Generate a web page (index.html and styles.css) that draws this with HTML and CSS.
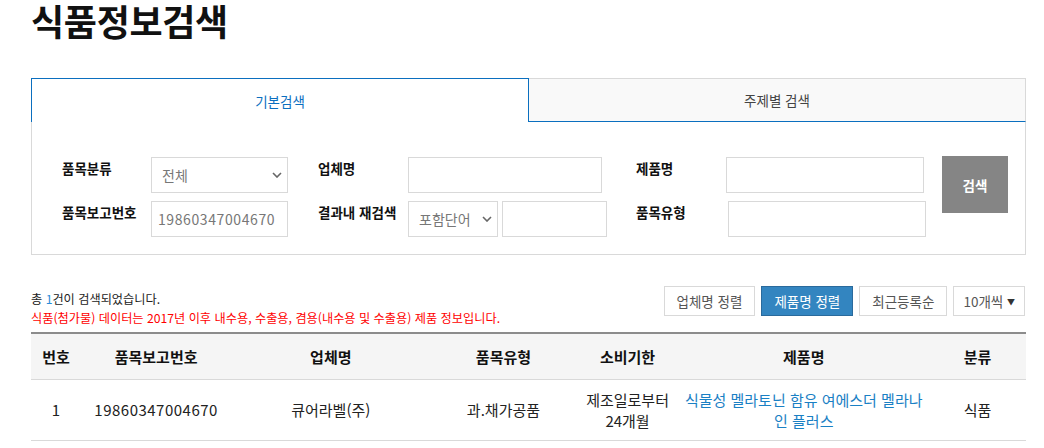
FILE: index.html
```html
<!DOCTYPE html>
<html lang="ko">

<head>
    <meta charset="UTF-8">
    <meta name="viewport" content="width=device-width, initial-scale=1.0">
    <title>식품정보검색</title>
    <link rel="stylesheet" href="styles.css">
</head>

<body>

    <div class="wrapper">
        <h1 class="title">식품정보검색</h1>

        <div class="tabs">
            <div class="tabs__item active">기본검색</div>
            <div class="tabs__item">주제별 검색</div>
        </div>

        <div class="search">
            <div class="search__row">
                <label class="search__label first">품목분류</label>
                <div class="select w137">
                    <select>
                        <option>전체</option>
                    </select>
                    <svg class="select__arrow" width="10" height="6" viewBox="0 0 10 6"><path d="M1 1l4 4 4-4" fill="none" stroke="#666" stroke-width="1.6"/></svg>
                </div>
                <label class="search__label">업체명</label>
                <input type="text" class="inp w194">
                <label class="search__label third">제품명</label>
                <input type="text" class="inp w198">
            </div>
            <div class="search__row">
                <label class="search__label first">품목보고번호</label>
                <input type="text" class="inp w137 num" value="19860347004670">
                <label class="search__label">결과내 재검색</label>
                <div class="select w90">
                    <select>
                        <option>포함단어</option>
                    </select>
                    <svg class="select__arrow" width="10" height="6" viewBox="0 0 10 6"><path d="M1 1l4 4 4-4" fill="none" stroke="#666" stroke-width="1.6"/></svg>
                </div>
                <input type="text" class="inp w105 ml4">
                <label class="search__label third wide">품목유형</label>
                <input type="text" class="inp w198">
            </div>
            <button class="search__btn">검색</button>
        </div>

        <div class="result">
            <div class="result__info">
                <p>총 <span class="blue">1</span>건이 검색되었습니다.</p>
                <p class="red">식품(첨가물) 데이터는 2017년 이후 내수용, 수출용, 겸용(내수용 및 수출용) 제품 정보입니다.</p>
            </div>
            <div class="result__sort">
                <button class="sort__btn">업체명 정렬</button>
                <button class="sort__btn on">제품명 정렬</button>
                <button class="sort__btn">최근등록순</button>
                <button class="sort__btn count">10개씩 <span class="tri">▼</span></button>
            </div>
        </div>

        <table class="table">
            <colgroup>
                <col style="width: 50px">
                <col style="width: 150px">
                <col style="width: 199px">
                <col style="width: 146px">
                <col style="width: 102px">
                <col style="width: 250px">
                <col style="width: 97px">
            </colgroup>
            <thead>
                <tr>
                    <th>번호</th>
                    <th>품목보고번호</th>
                    <th>업체명</th>
                    <th>품목유형</th>
                    <th>소비기한</th>
                    <th>제품명</th>
                    <th>분류</th>
                </tr>
            </thead>
            <tbody>
                <tr>
                    <td>1</td>
                    <td class="num">19860347004670</td>
                    <td>큐어라벨(주)</td>
                    <td>과.채가공품</td>
                    <td>제조일로부터<br>24개월</td>
                    <td><a href="#" class="link">식물성 멜라토닌 함유 여에스더 멜라나인 플러스</a></td>
                    <td>식품</td>
                </tr>
            </tbody>
        </table>
    </div>

</body>

</html>
```

FILE: styles.css
```css
* {
    margin: 0;
    padding: 0;
    box-sizing: border-box;
}

:root {
    --blue: #0b6fbf;
    --line: #d9d9d9;
    --gray: #555;
}

body {
    font-family: "Noto Sans CJK KR", "Noto Sans", sans-serif;
    font-size: 13px;
    color: #222;
    background: #fff;
}

.wrapper {
    width: 995px;
    margin-left: 31px;
}

.title {
    font-size: 36px;
    font-weight: 700;
    line-height: 40px;
    color: #111;
    letter-spacing: -0.3px;
}

/* tabs */
.tabs {
    display: flex;
    margin-top: 38px;
    height: 44px;
}

.tabs__item {
    flex: 1;
    display: flex;
    align-items: center;
    justify-content: center;
    font-size: 13.5px;
    color: #444;
    background: #f9f9f9;
    border: 1px solid var(--line);
    border-left: none;
    border-bottom: 1px solid var(--blue);
}

.tabs__item.active {
    flex: 0 0 498px;
    color: var(--blue);
    background: #fff;
    border: 1px solid var(--blue);
    border-bottom: none;
}

/* search panel */
.search {
    position: relative;
    border: 1px solid var(--line);
    border-top: none;
    padding: 35px 0 17px 30px;
    height: 133px;
}

.search__row {
    display: flex;
    align-items: flex-start;
    height: 36px;
    margin-bottom: 8px;
}

.search__label {
    width: 120px;
    padding-left: 30px;
    font-weight: 700;
    font-size: 13.5px;
    line-height: 20px;
    padding-top: 1px;
    color: #111;
}

.search__label.first {
    width: 89px;
    padding-left: 0;
}

.search__label.third {
    width: 124px;
    padding-left: 34px;
}

.search__label.wide {
    width: 121px;
    padding-left: 29px;
}

.inp,
.select select {
    height: 36px;
    border: 1px solid var(--line);
    outline: none;
    font-family: inherit;
    font-size: 14px;
    color: #777;
    padding: 0 8px;
    background: #fff;
}

.inp.num {
    padding-left: 6px;
    letter-spacing: 0.6px;
}

.select {
    position: relative;
}

.select select {
    width: 100%;
    appearance: none;
    -webkit-appearance: none;
    padding-left: 10px;
}

.select__arrow {
    position: absolute;
    right: 6px;
    top: 15px;
    pointer-events: none;
}

.w137 { width: 137px; }
.w90 { width: 90px; }
.w105 { width: 105px; }
.w194 { width: 194px; }
.w198 { width: 198px; }
.ml4 { margin-left: 4px; }

.search__btn {
    position: absolute;
    top: 34px;
    right: 17px;
    width: 66px;
    height: 57px;
    border: none;
    background: #858585;
    color: #fff;
    font-family: inherit;
    font-size: 13.5px;
    font-weight: 700;
}

/* result */
.result {
    display: flex;
    justify-content: space-between;
    align-items: flex-end;
    margin-top: 31px;
    padding-right: 1px;
}

.result__info {
    padding-bottom: 4px;
}

.result__info p {
    font-size: 12.2px;
    line-height: 19px;
    color: #222;
}

.result__info .red {
    color: #f00;
}

.blue {
    color: #2a8bd8;
}

.result__sort {
    display: flex;
    gap: 6px;
    margin-bottom: 16px;
}

.sort__btn {
    height: 30px;
    padding: 0 12px;
    border: 1px solid var(--line);
    background: #fff;
    font-family: inherit;
    font-size: 13.5px;
    color: var(--gray);
}

.sort__btn.on {
    background: #3385c0;
    border-color: #2a6a9c;
    color: #fff;
}

.sort__btn.count {
    padding: 0 9px;
}

.tri {
    font-size: 8px;
    color: #333;
    vertical-align: 2px;
}

/* table */
.table {
    width: 995px;
    border-collapse: collapse;
    table-layout: fixed;
    border-top: 2px solid #8c8c8c;
}

.table th {
    height: 46px;
    background: #f5f5f5;
    font-size: 15px;
    font-weight: 700;
    color: #111;
    border-bottom: 1px solid var(--line);
}

.table td {
    height: 61px;
    text-align: center;
    font-size: 15px;
    line-height: 21px;
    color: #222;
    border-bottom: 1px solid var(--line);
    padding: 0 4px;
}

.table td.num {
    letter-spacing: 0.5px;
}

.link {
    color: #1a80c4;
    text-decoration: none;
}
```
